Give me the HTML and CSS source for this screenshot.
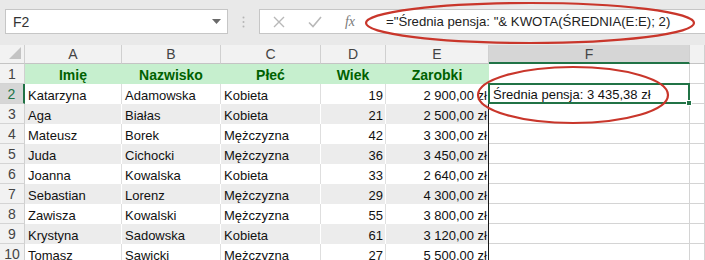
FILE: index.html
```html
<!DOCTYPE html>
<html>
<head>
  <meta charset="UTF-8">
  <title>Średnia pensja</title>
  <link rel="stylesheet" href="styles.css">
</head>
<body>
  <!-- pasek formuły -->
  <div class="topbar">
    <div class="namebox">
      <span>F2</span>
      <svg class="drop" width="9" height="5" viewBox="0 0 9 5"><path d="M0 0h9L4.5 5z" fill="#6a6a6a"/></svg>
    </div>
    <div class="grip">
      <svg width="3" height="12" viewBox="0 0 3 12"><circle cx="1.5" cy="1.5" r="1" fill="#b5b5b5"/><circle cx="1.5" cy="6" r="1" fill="#b5b5b5"/><circle cx="1.5" cy="10.5" r="1" fill="#b5b5b5"/></svg>
    </div>
    <div class="formula">
      <span class="ficon"><svg width="12" height="12" viewBox="0 0 12 12"><path d="M1 1l10 10M11 1L1 11" stroke="#b8b8b8" stroke-width="1.4" fill="none"/></svg></span>
      <span class="ficon"><svg width="14" height="12" viewBox="0 0 14 12"><path d="M1 6.5l4 4L13 1" stroke="#b8b8b8" stroke-width="1.6" fill="none"/></svg></span>
      <span class="ficon fx">fx</span>
      <span class="ftext">="Średnia pensja: "&amp; KWOTA(ŚREDNIA(E:E); 2)</span>
    </div>
  </div>

  <!-- arkusz -->
  <div class="sheet">
    <div class="corner"><svg width="12" height="12" viewBox="0 0 12 12"><path d="M12 0v12H0z" fill="#c4c4c4"/></svg></div>
    <div class="colhead">A</div>
    <div class="colhead">B</div>
    <div class="colhead">C</div>
    <div class="colhead">D</div>
    <div class="colhead">E</div>
    <div class="colhead active">F</div>
    <div class="colhead"></div>

    <div class="rowhead">1</div>
    <div class="cell head">Imię</div>
    <div class="cell head">Nazwisko</div>
    <div class="cell head">Płeć</div>
    <div class="cell head">Wiek</div>
    <div class="cell head">Zarobki</div>
    <div class="cell blank"></div>
    <div class="cell blank"></div>

    <div class="rowhead active">2</div>
    <div class="cell">Katarzyna</div>
    <div class="cell">Adamowska</div>
    <div class="cell">Kobieta</div>
    <div class="cell num">19</div>
    <div class="cell num last">2 900,00 zł</div>
    <div class="cell blank selected">Średnia pensja: 3 435,38 zł<span class="sel"><span class="handle"></span></span></div>
    <div class="cell blank"></div>

    <div class="rowhead">3</div>
    <div class="cell alt">Aga</div>
    <div class="cell alt">Białas</div>
    <div class="cell alt">Kobieta</div>
    <div class="cell alt num">21</div>
    <div class="cell alt num last">2 500,00 zł</div>
    <div class="cell blank"></div>
    <div class="cell blank"></div>

    <div class="rowhead">4</div>
    <div class="cell">Mateusz</div>
    <div class="cell">Borek</div>
    <div class="cell">Mężczyzna</div>
    <div class="cell num">42</div>
    <div class="cell num last">3 300,00 zł</div>
    <div class="cell blank"></div>
    <div class="cell blank"></div>

    <div class="rowhead">5</div>
    <div class="cell alt">Juda</div>
    <div class="cell alt">Cichocki</div>
    <div class="cell alt">Mężczyzna</div>
    <div class="cell alt num">36</div>
    <div class="cell alt num last">3 450,00 zł</div>
    <div class="cell blank"></div>
    <div class="cell blank"></div>

    <div class="rowhead">6</div>
    <div class="cell">Joanna</div>
    <div class="cell">Kowalska</div>
    <div class="cell">Kobieta</div>
    <div class="cell num">33</div>
    <div class="cell num last">2 640,00 zł</div>
    <div class="cell blank"></div>
    <div class="cell blank"></div>

    <div class="rowhead">7</div>
    <div class="cell alt">Sebastian</div>
    <div class="cell alt">Lorenz</div>
    <div class="cell alt">Mężczyzna</div>
    <div class="cell alt num">29</div>
    <div class="cell alt num last">4 300,00 zł</div>
    <div class="cell blank"></div>
    <div class="cell blank"></div>

    <div class="rowhead">8</div>
    <div class="cell">Zawisza</div>
    <div class="cell">Kowalski</div>
    <div class="cell">Mężczyzna</div>
    <div class="cell num">55</div>
    <div class="cell num last">3 800,00 zł</div>
    <div class="cell blank"></div>
    <div class="cell blank"></div>

    <div class="rowhead">9</div>
    <div class="cell alt">Krystyna</div>
    <div class="cell alt">Sadowska</div>
    <div class="cell alt">Kobieta</div>
    <div class="cell alt num">61</div>
    <div class="cell alt num last">3 120,00 zł</div>
    <div class="cell blank"></div>
    <div class="cell blank"></div>

    <div class="rowhead">10</div>
    <div class="cell">Tomasz</div>
    <div class="cell">Sawicki</div>
    <div class="cell">Mężczyzna</div>
    <div class="cell num">27</div>
    <div class="cell num last">5 500,00 zł</div>
    <div class="cell blank"></div>
    <div class="cell blank"></div>
  </div>

  <!-- czerwone zaznaczenia -->
  <svg class="marks" width="705" height="260" viewBox="0 0 705 260">
    <ellipse cx="530" cy="23" rx="164" ry="20" fill="none" stroke="#c9362b" stroke-width="2.2"/>
    <ellipse cx="573" cy="95" rx="95" ry="28" fill="none" stroke="#c9362b" stroke-width="2.2"/>
  </svg>
</body>
</html>
```

FILE: styles.css
```css
/* całość */
* {
  box-sizing: border-box;
}

body {
  margin: 0;
  width: 705px;
  height: 260px;
  overflow: hidden;
  position: relative;
  background-color: #fff;
  font-family: "Liberation Sans", Arial, sans-serif;
  font-size: 13px;
  color: #111;
}

/* pasek formuły */
.topbar {
  height: 45px;
  background-color: #e9e9e9;
  display: flex;
  padding: 9px 0 0 5px;
}

.namebox {
  width: 223px;
  height: 25px;
  background-color: #fff;
  border: 1px solid #c6c6c6;
  display: flex;
  align-items: center;
  justify-content: space-between;
  padding: 0 6px 0 7px;
  color: #333;
  font-size: 14px;
}

.grip {
  width: 31px;
  height: 25px;
  display: flex;
  align-items: center;
  justify-content: center;
}

.formula {
  flex: 1;
  height: 25px;
  background-color: #fff;
  border: 1px solid #c6c6c6;
  border-right: none;
  display: flex;
  align-items: center;
}

.ficon {
  width: 36px;
  display: flex;
  justify-content: center;
}

.ficon:first-child {
  width: 37px;
}

.fx {
  width: 34px;
  font-family: "Liberation Serif", serif;
  font-style: italic;
  font-size: 14px;
  color: #7a7a7a;
}

.ftext {
  margin-left: 19px;
  white-space: nowrap;
  font-size: 13.2px;
  color: #222;
}

/* arkusz */
.sheet {
  display: grid;
  grid-template-columns: 25px 97px 99px 100px 65px 103px 201px 1fr;
  grid-template-rows: 19px repeat(10, 20px);
}

.corner,
.colhead,
.rowhead {
  background-color: #f2f2f2;
  border-right: 1px solid #d0d0d0;
  border-bottom: 1px solid #c4c4c4;
  color: #444;
  display: flex;
  align-items: center;
  justify-content: center;
  font-size: 14px;
}

.corner {
  align-items: flex-end;
  justify-content: flex-end;
  padding: 0 3px 4px 0;
}

.rowhead {
  border-bottom-color: #d4d4d4;
}

.colhead.active {
  background-color: #d6d6d6;
  border-bottom: 2px solid #217346;
  color: #444;
}

.rowhead.active {
  background-color: #d6d6d6;
  border-right: 2px solid #217346;
  color: #217346;
}

.cell {
  background-color: #fff;
  border-right: 1px solid #dedede;
  display: flex;
  align-items: center;
  padding: 2px 3px 0;
  white-space: nowrap;
  overflow: hidden;
}

.cell.alt {
  background-color: #ececec;
  border-right-color: #fff;
}

.cell.head {
  background-color: #c6efce;
  border-right-color: #c6efce;
  color: #006100;
  font-weight: bold;
  font-size: 14px;
  justify-content: center;
}

.cell.num {
  justify-content: flex-end;
  padding-right: 2px;
}

.cell.last {
  border-right: 1px solid #1a1a1a;
  padding-right: 1px;
}

.cell.blank {
  border-bottom: 1px solid #d4d4d4;
  border-right: 1px solid #d4d4d4;
}

.cell.selected {
  position: relative;
  overflow: visible;
  padding-left: 4px;
}

.sel {
  position: absolute;
  left: -1px;
  top: -1px;
  right: -1px;
  bottom: -1px;
  border: 2px solid #217346;
}

.handle {
  position: absolute;
  right: -4px;
  bottom: -4px;
  width: 6px;
  height: 6px;
  background-color: #217346;
  border: 1px solid #fff;
}

/* czerwone elipsy */
.marks {
  position: absolute;
  left: 0;
  top: 0;
  pointer-events: none;
}
```
